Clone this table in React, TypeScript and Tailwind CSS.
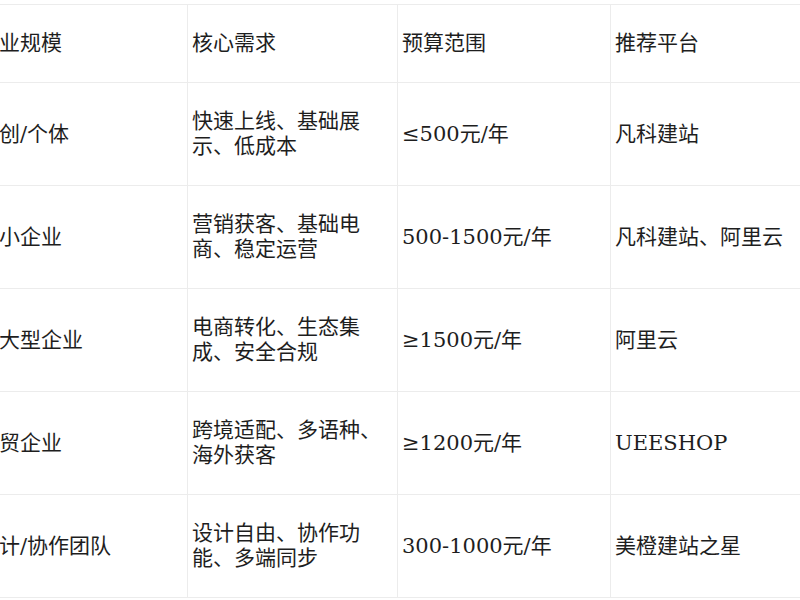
const rows = [
  ["企业规模", "核心需求", "预算范围", "推荐平台"],
  ["初创/个体", "快速上线、基础展示、低成本", "≤500元/年", "凡科建站"],
  ["中小企业", "营销获客、基础电商、稳定运营", "500-1500元/年", "凡科建站、阿里云"],
  ["中大型企业", "电商转化、生态集成、安全合规", "≥1500元/年", "阿里云"],
  ["外贸企业", "跨境适配、多语种、海外获客", "≥1200元/年", "UEESHOP"],
  ["设计/协作团队", "设计自由、协作功能、多端同步", "300-1000元/年", "美橙建站之星"],
]

export default function App() {
  return (
    <div className="h-[600px] w-[800px] overflow-hidden bg-white pt-[4px]">
      <div
        className="ml-[-26px] grid w-[848px] grid-cols-[214px_210px_213px_211px] border-t border-[#ececec] text-[21px] leading-[25px] text-[#1e1e1e]"
        style={{ fontFamily: '"DejaVu Serif", "Noto Sans CJK SC", serif' }}
      >
        {rows.map((row, r) =>
          row.map((cell, c) => (
            <div
              key={`${r}-${c}`}
              className={`flex items-center border-b border-r border-[#ececec] px-[4px] ${
                r === 0 ? "h-[78px]" : "h-[103px]"
              }`}
            >
              <span>{cell}</span>
            </div>
          ))
        )}
      </div>
    </div>
  )
}
